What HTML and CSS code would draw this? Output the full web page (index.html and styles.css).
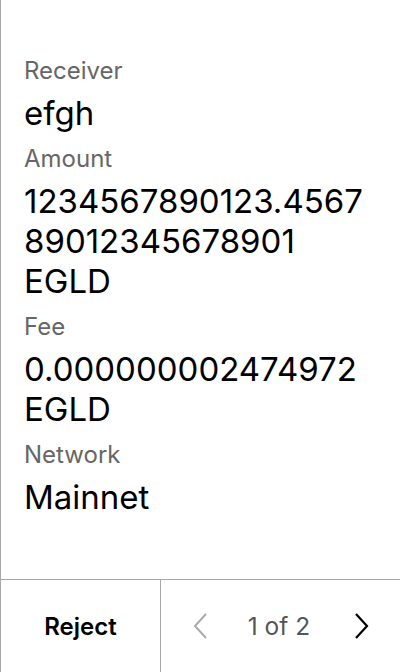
FILE: index.html
```html
<!DOCTYPE html>
<html>
<head>
<meta charset="utf-8">
<link rel="stylesheet" href="styles.css">
</head>
<body>
<div class="screen">
  <div class="content">
    <div class="field">
      <div class="label">Receiver</div>
      <div class="value">efgh</div>
    </div>
    <div class="field">
      <div class="label">Amount</div>
      <div class="value">1234567890123.4567<br>89012345678901<br>EGLD</div>
    </div>
    <div class="field">
      <div class="label">Fee</div>
      <div class="value">0.000000002474972<br>EGLD</div>
    </div>
    <div class="field">
      <div class="label">Network</div>
      <div class="value">Mainnet</div>
    </div>
  </div>
  <div class="footer">
    <div class="reject">Reject</div>
    <div class="pager">
      <svg class="chev prev" width="16" height="26" viewBox="0 0 16 26"><path d="M13 1 L2 13 L13 25" fill="none" stroke="#aaaaaa" stroke-width="2"/></svg>
      <span class="count">1 of 2</span>
      <svg class="chev next" width="16" height="26" viewBox="0 0 16 26"><path d="M3 1 L14 13 L3 25" fill="none" stroke="#000000" stroke-width="2.2"/></svg>
    </div>
  </div>
</div>
</body>
</html>
```
FILE: styles.css
```css
html, body {
  margin: 0;
  padding: 0;
  background: #ffffff;
}
body {
  font-family: Inter, "Noto Sans", "Liberation Sans", sans-serif;
  color: #000;
}
.screen {
  width: 400px;
  height: 672px;
  box-sizing: border-box;
  border-left: 1px solid #a8a8a8;
  display: flex;
  flex-direction: column;
}
.content {
  flex: 1;
  padding: 57px 0 0 23px;
}
.field {
  display: flex;
  flex-direction: column;
  margin-bottom: 12px;
}
.label {
  font-size: 24px;
  line-height: 28px;
  color: #666666;
  margin-bottom: 8px;
}
.value {
  font-size: 33px;
  line-height: 40px;
  color: #000;
}
.footer {
  height: 92px;
  border-top: 1px solid #a8a8a8;
  display: flex;
}
.reject {
  width: 159px;
  border-right: 1px solid #a8a8a8;
  display: flex;
  align-items: center;
  justify-content: center;
  font-size: 24px;
  font-weight: 600;
}
.pager {
  flex: 1;
  display: flex;
  align-items: center;
  justify-content: space-between;
  padding: 0 31px 0 32px;
}
.count {
  font-size: 24.5px;
  color: #555555;
  margin-right: 4px;
}
```
